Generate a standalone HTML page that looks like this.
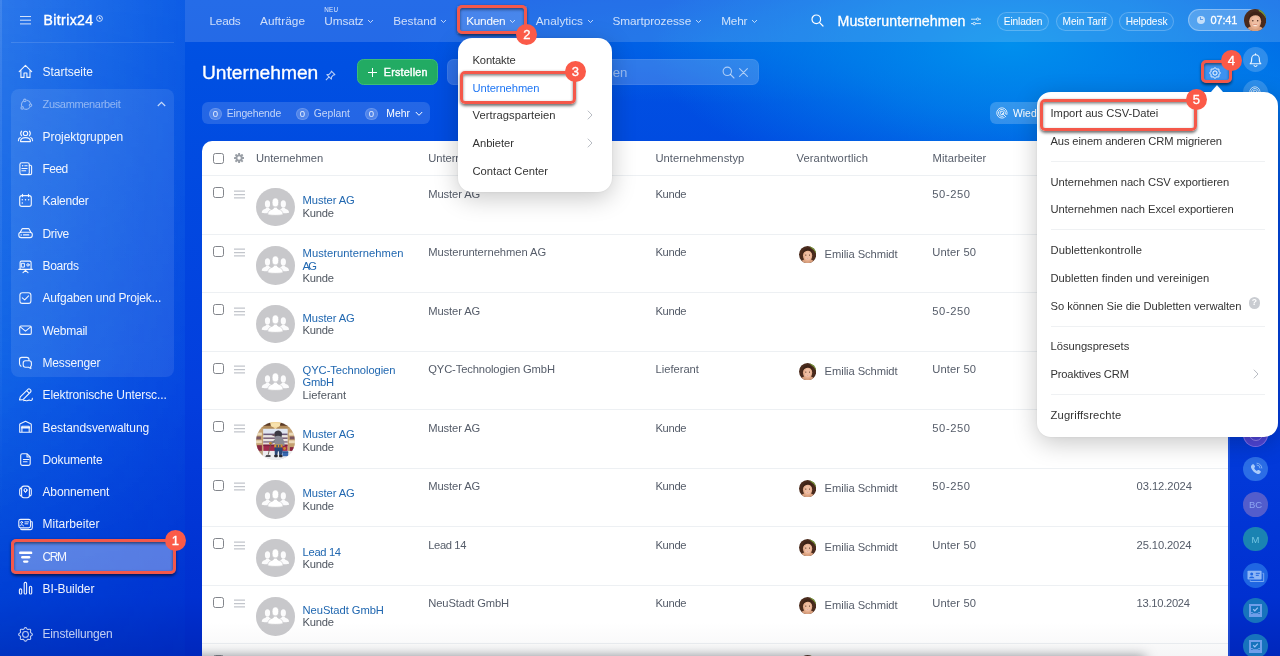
<!DOCTYPE html><html lang="de"><head><meta charset="utf-8"><title>Unternehmen</title><style>
*{box-sizing:border-box;margin:0;padding:0}
html,body{width:1280px;height:656px;overflow:hidden}
body{position:relative;font-family:"Liberation Sans",sans-serif;color:#fff;
 background:
  radial-gradient(ellipse 360px 150px at 1010px 45px, rgba(0,146,238,.95) 0%, rgba(0,142,236,.62) 45%, rgba(0,140,236,0) 100%),
  radial-gradient(ellipse 420px 120px at 1280px 90px, rgba(0,120,232,.8) 0%, rgba(0,120,232,0) 100%),
  radial-gradient(ellipse 330px 62px at 720px 42px, rgba(0,130,236,.42) 0%, rgba(0,130,236,0) 100%),
  linear-gradient(180deg,#0053e4 0%,#0050e2 10%,#033ede 60%,#0030d0 91%,#0027bc 100%);}
#app{position:absolute;left:0;top:0;width:1280px;height:656px;overflow:hidden;will-change:transform}
.abs{position:absolute}
.t{position:absolute;white-space:nowrap;line-height:1}
#sidebar{left:0;top:0;width:185px;height:656px}
#sidebar i{position:absolute;inset:0;display:block}
#sidebar i.a{background:linear-gradient(90deg,rgba(255,255,255,.17) 0,rgba(255,255,255,.05) 100%);-webkit-mask-image:linear-gradient(180deg,#000 0,rgba(0,0,0,.3) 60%,transparent 90%);mask-image:linear-gradient(180deg,#000 0,rgba(0,0,0,.3) 60%,transparent 90%)}
#sidebar i.b{background:linear-gradient(90deg,rgba(0,200,255,.2) 0,rgba(0,200,255,.05) 100%);-webkit-mask-image:linear-gradient(180deg,rgba(0,0,0,.4) 0,#000 55%,rgba(0,0,0,.4) 100%);mask-image:linear-gradient(180deg,rgba(0,0,0,.4) 0,#000 55%,rgba(0,0,0,.4) 100%)}
#sidebar:after{content:"";position:absolute;left:0;top:0;width:1.5px;height:100%;background:linear-gradient(180deg,rgba(255,255,255,.1),rgba(255,255,255,0) 80%)}
#topbar{left:185px;top:0;width:1095px;height:41.5px;background:rgba(255,255,255,.145)}
#grp{left:11px;top:89px;width:163px;height:288px;border-radius:8px;background:rgba(255,255,255,.09)}
.si{font-size:12px;color:#fff;left:42.5px}
.ic{position:absolute;fill:none;stroke:rgba(255,255,255,.93);stroke-width:1.1;stroke-linecap:round;stroke-linejoin:round;overflow:visible}
.nav{font-size:11.7px;color:rgba(255,255,255,.78)}
.chev{position:absolute;width:7px;height:5px;fill:none;stroke:rgba(255,255,255,.7);stroke-width:1}
.pill{position:absolute;top:12px;height:18.5px;background:rgba(255,255,255,.04);border:1px solid rgba(255,255,255,.22);border-radius:10px;font-size:10.3px;color:#fff;text-align:center;line-height:16.5px;white-space:nowrap}
#grid{left:202px;top:141px;width:1026px;height:520px;background:#fff;border-radius:10px 0 0 0}
.hl{position:absolute;left:202px;width:1026px;height:1px;background:#edf0f3}
.th,.td{position:absolute;white-space:nowrap;line-height:1;font-size:11px;color:#555c66}
.lnk{position:absolute;white-space:nowrap;line-height:12.5px;font-size:11.2px;color:#2067b0}
.cb{position:absolute;left:213px;width:11.2px;height:11.2px;border:1px solid #82858b;border-radius:2.5px;background:#fff}
.hd{position:absolute;left:233.8px;width:11.4px;height:7.7px;border-top:1px solid #b9bdc3;border-bottom:1px solid #b9bdc3}
.hd:after{content:"";position:absolute;left:0;right:0;top:2.35px;height:1px;background:#b9bdc3}
.av{position:absolute;left:256.3px;width:38.8px;height:38.6px;border-radius:50%;background:#c8c8cb;overflow:hidden}
.ua{position:absolute;left:799.5px;width:17px;height:17px;border-radius:50%;overflow:hidden}
.menu{position:absolute;background:#fff;box-shadow:0 6px 24px rgba(0,0,0,.22),0 0 2px rgba(0,0,0,.08)}
.mi{position:absolute;white-space:nowrap;line-height:1;font-size:11.1px;color:#333}
.sep{position:absolute;left:1050.5px;width:214px;height:1px;background:#eff1f3}
.rb{position:absolute;border:3px solid #f4584a;border-radius:5px;box-shadow:0 1.5px 3px rgba(0,0,0,.55),inset 0 1.5px 3px rgba(0,0,0,.5)}
.bd{position:absolute;width:21px;height:21px;border-radius:50%;background:#fb5a48;color:#fff;font-size:13px;-webkit-text-stroke:.35px #fff;text-align:center;line-height:21.5px}
.rc{position:absolute;left:1243px;width:24.8px;height:24.8px;border-radius:50%;background:rgba(255,255,255,.18)}
.cnt{position:absolute;top:107.5px;width:12.4px;height:12.4px;border-radius:50%;background:rgba(255,255,255,.2);box-shadow:inset 0 0 0 1px rgba(255,255,255,.14);font-size:9.6px;line-height:12.6px;text-align:center;color:rgba(255,255,255,.85)}
.ct{font-size:10.3px;color:rgba(255,255,255,.72);top:107.5px}
</style></head><body><div id="app">
<div id="sidebar" class="abs"><i class="b"></i><i class="a"></i></div><div id="topbar" class="abs"></div><div id="grp" class="abs"></div>
<div class="abs" style="left:11px;top:42px;width:163px;height:1px;background:rgba(255,255,255,.13)"></div>
<div class="abs" style="left:19.5px;top:16px;width:11.5px;height:1.2px;background:rgba(255,255,255,.8);box-shadow:0 3.7px 0 rgba(255,255,255,.8),0 7.4px 0 rgba(255,255,255,.8)"></div>
<div class="t" style="left:43.6px;top:13px;font-size:14px;letter-spacing:0.387px;-webkit-text-stroke:.38px #fff;">Bitrix24</div>
<svg class="abs" style="left:96px;top:15px" width="7" height="7" viewBox="0 0 7 7" fill="none" stroke="rgba(255,255,255,.85)" stroke-width=".9"><circle cx="3.5" cy="3.5" r="2.9"/><path d="M3.5 1.8v1.9h1.5"/></svg>
<div class="abs" style="left:11px;top:540px;width:164px;height:34px;border-radius:4px;background:rgba(255,255,255,.34)"></div>
<svg class="ic" style="left:16px;top:62px;width:20px;height:20px;" viewBox="16 62 20 20"><path d="M19.2 71.7 25.45 65.4l6.25 6.300M20.900 70.300V77.400h3.100v-4.400h2.900v4.400H30V70.300"/></svg>
<div class="t" style="left:42.5px;top:66px;font-size:12px;letter-spacing:-0.023px;color:rgba(255,255,255,.94);">Startseite</div>
<svg class="ic" style="left:16px;top:94px;width:20px;height:20px;opacity:0.5;" viewBox="16 94 20 20"><circle cx="24.8" cy="100.4" r="1.25"/><circle cx="30.500" cy="105.300" r="1.250"/><circle cx="22.200" cy="107.900" r="1.250"/><path d="M27.06 100.20A4.6 4.6 0 0 1 30.56 103.59M29.72 107.53A4.6 4.6 0 0 1 24.38 108.97M21.60 105.66A4.6 4.6 0 0 1 22.90 101.39"/></svg>
<div class="t" style="left:42.5px;top:99px;font-size:11px;letter-spacing:-0.331px;color:rgba(255,255,255,.94);opacity:0.5;">Zusammenarbeit</div>
<svg class="ic" style="left:16px;top:126px;width:20px;height:20px;" viewBox="16 126 20 20"><circle cx="25.5" cy="133.4" r="2.15"/><path d="M21.6 131.200Q19.700 133.500 21.600 135.800M29.400 131.200q1.900 2.300 0 4.600M20.500 141.600c0-5.300 10-5.300 10 0zM18.400 140.800c0-1.700.8-2.800 1.900-3.200M32.600 140.800c0-1.700-.8-2.800-1.900-3.200"/></svg>
<div class="t" style="left:42.5px;top:131px;font-size:12px;letter-spacing:-0.049px;color:rgba(255,255,255,.94);">Projektgruppen</div>
<svg class="ic" style="left:16px;top:159px;width:20px;height:20px;" viewBox="16 159 20 20"><rect x="19.9" y="162.7" width="9.4" height="11.9" rx="1.8"/><path d="M29.300 165.300h1a1.300 1.300 0 0 1 1.300 1.300v6.700a1.300 1.300 0 0 1-1.300 1.300H28M24.800 165.800h2.300M21.900 168.500h5.200M21.900 170.800h3.800"/><path d="M22.6 165.8h.01" stroke-width="1.500"/></svg>
<div class="t" style="left:42.5px;top:163px;font-size:12px;letter-spacing:-0.536px;color:rgba(255,255,255,.94);">Feed</div>
<svg class="ic" style="left:16px;top:191px;width:20px;height:20px;" viewBox="16 191 20 20"><rect x="19.7" y="195.6" width="11.6" height="10.8" rx="2.2"/><path d="M22.500 194.400v2.200M28.500 194.400v2.200"/><path d="M22.3 199.8h.01M25.5 199.8h.01M28.6 199.8h.01M22.3 203h.01" stroke-width="1.500"/></svg>
<div class="t" style="left:42.5px;top:195px;font-size:12px;letter-spacing:-0.257px;color:rgba(255,255,255,.94);">Kalender</div>
<svg class="ic" style="left:16px;top:223px;width:20px;height:20px;" viewBox="16 223 20 20"><rect x="18.8" y="232.3" width="13.500" height="5.300" rx="2.300"/><path d="M20.300 232.300 22 229q.2-.4.700-.4h5.700q.5 0 .7.400l1.700 3.300M23.500 234.900h5.300"/><path d="M21.2 234.9h.01" stroke-width="1.500"/></svg>
<div class="t" style="left:42.5px;top:228px;font-size:12px;letter-spacing:-0.316px;color:rgba(255,255,255,.94);">Drive</div>
<svg class="ic" style="left:16px;top:256px;width:20px;height:20px;" viewBox="16 256 20 20"><path d="M20.100 269.400v-7a1.300 1.300 0 0 1 1.300-1.300h8.400a1.300 1.300 0 0 1 1.300 1.300v7M18.800 269.400h13.500M23 272.600l2.500-2.300 2.500 2.300"/><rect x="21.700" y="263.300" width="2.700" height="3.800" stroke-width="1"/><circle cx="28" cy="264.900" r="1.200" stroke-width="1"/></svg>
<div class="t" style="left:42.5px;top:260px;font-size:12px;letter-spacing:-0.306px;color:rgba(255,255,255,.94);">Boards</div>
<svg class="ic" style="left:16px;top:288px;width:20px;height:20px;" viewBox="16 288 20 20"><rect x="19.9" y="292.700" width="11" height="10.700" rx="2.400"/><path d="m22.300 297.800 2.400 2.100 3.900-4"/></svg>
<div class="t" style="left:42.5px;top:292px;font-size:12px;letter-spacing:-0.159px;color:rgba(255,255,255,.94);">Aufgaben und Projek...</div>
<svg class="ic" style="left:16px;top:320px;width:20px;height:20px;" viewBox="16 320 20 20"><rect x="19.700" y="326" width="11.600" height="8.400" rx="1.300"/><path d="m20.300 326.900 5.200 4.200 5.200-4.200"/></svg>
<div class="t" style="left:42.5px;top:325px;font-size:12px;letter-spacing:-0.245px;color:rgba(255,255,255,.94);">Webmail</div>
<svg class="ic" style="left:16px;top:352px;width:20px;height:20px;" viewBox="16 352 20 20"><path d="M29 360.200v-.5a2.300 2.300 0 0 0-2.300-2.300h-4.900a2.300 2.300 0 0 0-2.300 2.300v3.800c0 1.300.5 2.100 1.500 2.800"/><path d="M25.400 360.800h3.800a2.200 2.200 0 0 1 2.200 2.200v2a2.200 2.200 0 0 1-.8 1.700l.3 1.900-2.300-1.400h-3.200a2.200 2.200 0 0 1-2.200-2.200v-2a2.200 2.200 0 0 1 2.200-2.200z"/></svg>
<div class="t" style="left:42.5px;top:357px;font-size:12px;letter-spacing:-0.172px;color:rgba(255,255,255,.94);">Messenger</div>
<svg class="ic" style="left:16px;top:385px;width:20px;height:20px;" viewBox="16 385 20 20"><path d="m19.500 400 .8-3.100 7.600-7.600a1.500 1.500 0 0 1 2.100 0l.6.600a1.500 1.500 0 0 1 0 2.100L23 399.600zM26.700 390.600l2.700 2.700"/><path d="M23.600 400.700c1-.9 2 .2 3 .1s2-1.100 3.200-.6 2.900.4 2.500-2"/></svg>
<div class="t" style="left:42.5px;top:389px;font-size:12px;letter-spacing:-0.107px;color:rgba(255,255,255,.94);">Elektronische Untersc...</div>
<svg class="ic" style="left:16px;top:417px;width:20px;height:20px;" viewBox="16 417 20 20"><path d="M19.700 432.300v-7.700q0-.6.600-.9l5.200-2.500 5.200 2.500q.6.300.6.900v7.700zM21.900 432.300v-6.100h7.300v6.100"/><path d="M21.900 427.700h7.300" stroke-width="1.700"/></svg>
<div class="t" style="left:42.5px;top:422px;font-size:12px;letter-spacing:-0.078px;color:rgba(255,255,255,.94);">Bestandsverwaltung</div>
<svg class="ic" style="left:16px;top:449px;width:20px;height:20px;" viewBox="16 449 20 20"><path d="M20.700 455.600a1.800 1.800 0 0 1 1.800-1.800h4.700l3 3v6.800a1.800 1.800 0 0 1-1.800 1.800h-5.900a1.800 1.800 0 0 1-1.800-1.800zM27 454v3h3M23.400 459.500h5.400M23.400 461.800h3.700"/></svg>
<div class="t" style="left:42.5px;top:454px;font-size:12px;letter-spacing:-0.141px;color:rgba(255,255,255,.94);">Dokumente</div>
<svg class="ic" style="left:16px;top:481px;width:20px;height:20px;" viewBox="16 481 20 20"><rect x="21.600" y="486.100" width="7.800" height="11.600" rx="2.200"/><path d="M20.900 487.900q-1.200.7-1.200 2.100v4q0 1.300 1.200 2M30.100 487.900q1.200.7 1.200 2.100v4q0 1.300-1.200 2"/><circle cx="25.500" cy="490" r="1.500" stroke-width="1"/><path d="m24.300 490.900 1.200 1.700 1.200-1.700" stroke-width="1"/></svg>
<div class="t" style="left:42.5px;top:486px;font-size:12px;letter-spacing:-0.129px;color:rgba(255,255,255,.94);">Abonnement</div>
<svg class="ic" style="left:16px;top:514px;width:20px;height:20px;" viewBox="16 514 20 20"><rect x="18.800" y="519.400" width="11.700" height="8.500" rx="1.800"/><path d="M31.700 521.500q.6.500.6 1.500v4.800a1.800 1.800 0 0 1-1.800 1.800H22q-1 0-1.400-.6"/><circle cx="21.700" cy="522.400" r=".95" stroke-width="1"/><path d="M19.900 525.900c.2-1.700 3.400-1.700 3.600 0M24.900 521.900h3.700M24.900 523.800h3" stroke-width="1"/></svg>
<div class="t" style="left:42.5px;top:518px;font-size:12px;letter-spacing:0.031px;color:rgba(255,255,255,.94);">Mitarbeiter</div>
<svg class="abs" style="left:17px;top:548px" width="18" height="18" viewBox="17 548 18 18" fill="#fff"><rect x="19.1" y="551.6" width="13.2" height="2.5" rx="1.2"/><rect x="21.100" y="556" width="9.200" height="2.400" rx="1.200"/><rect x="23" y="560.400" width="5.500" height="2.300" rx="1.150"/></svg>
<div class="t" style="left:42.5px;top:551px;font-size:12px;letter-spacing:-1.414px;color:rgba(255,255,255,.94);">CRM</div>
<svg class="ic" style="left:16px;top:578px;width:20px;height:20px;" viewBox="16 578 20 20"><rect x="19.400" y="588.900" width="2.300" height="5.100" rx="1.100"/><rect x="24.200" y="582.400" width="2.400" height="11.600" rx="1.100"/><rect x="29.400" y="586.300" width="2.300" height="7.700" rx="1.100"/></svg>
<div class="t" style="left:42.5px;top:583px;font-size:12px;letter-spacing:-0.087px;color:rgba(255,255,255,.94);">BI-Builder</div>
<svg class="ic" style="left:16px;top:624px;width:20px;height:20px;opacity:0.8;" viewBox="16 624 20 20"><path d="M32.40 634.40L32.20 634.99L31.68 635.49L31.08 635.89L30.62 636.26L30.44 636.70L30.50 637.29L30.64 638.00L30.65 638.72L30.38 639.28L29.82 639.55L29.10 639.54L28.39 639.40L27.80 639.34L27.36 639.52L26.99 639.98L26.59 640.58L26.09 641.10L25.50 641.30L24.91 641.10L24.41 640.58L24.01 639.98L23.64 639.52L23.20 639.34L22.61 639.40L21.90 639.54L21.18 639.55L20.62 639.28L20.35 638.72L20.36 638.00L20.50 637.29L20.56 636.70L20.38 636.26L19.92 635.89L19.32 635.49L18.80 634.99L18.60 634.40L18.80 633.81L19.32 633.31L19.92 632.91L20.38 632.54L20.56 632.10L20.50 631.51L20.36 630.80L20.35 630.08L20.62 629.52L21.18 629.25L21.90 629.26L22.61 629.40L23.20 629.46L23.64 629.28L24.01 628.82L24.41 628.22L24.91 627.70L25.50 627.50L26.09 627.70L26.59 628.22L26.99 628.82L27.36 629.28L27.80 629.46L28.39 629.40L29.10 629.26L29.82 629.25L30.38 629.52L30.65 630.08L30.64 630.80L30.50 631.51L30.44 632.10L30.62 632.54L31.08 632.91L31.68 633.31L32.20 633.81Z"/><circle cx="25.500" cy="634.400" r="2.900"/></svg>
<div class="t" style="left:42.5px;top:628px;font-size:12px;letter-spacing:-0.155px;color:rgba(255,255,255,.94);opacity:0.8;">Einstellungen</div>
<svg class="abs" style="left:157px;top:101px" width="9" height="6" viewBox="0 0 9 6" fill="none" stroke="rgba(255,255,255,.75)" stroke-width="1.2"><path d="M.8 5 4.5 1.3 8.2 5"/></svg>
<div class="abs" style="left:457px;top:6px;width:69.5px;height:28px;background:rgba(255,255,255,.16)"></div>
<div class="t" style="left:209.5px;top:16px;font-size:11.8px;letter-spacing:-0.227px;color:rgba(255,255,255,.78);">Leads</div>
<div class="t" style="left:260px;top:16px;font-size:11.8px;letter-spacing:0.056px;color:rgba(255,255,255,.78);">Aufträge</div>
<div class="t" style="left:324.25px;top:16px;font-size:11.8px;letter-spacing:-0.097px;color:rgba(255,255,255,.78);">Umsatz</div>
<svg class="chev" style="left:367.25px;top:19px" viewBox="0 0 7 5"><path d="M1 1l2.5 2.5L6 1"/></svg>
<div class="t" style="left:393.25px;top:16px;font-size:11.8px;letter-spacing:-0.049px;color:rgba(255,255,255,.78);">Bestand</div>
<svg class="chev" style="left:439.75px;top:19px" viewBox="0 0 7 5"><path d="M1 1l2.5 2.5L6 1"/></svg>
<div class="t" style="left:466.25px;top:16px;font-size:11.8px;letter-spacing:-0.287px;color:#fff;">Kunden</div>
<svg class="chev" style="left:509.0px;top:19px" viewBox="0 0 7 5"><path d="M1 1l2.5 2.5L6 1"/></svg>
<div class="t" style="left:535.75px;top:16px;font-size:11.8px;letter-spacing:0.004px;color:rgba(255,255,255,.78);">Analytics</div>
<svg class="chev" style="left:586.5px;top:19px" viewBox="0 0 7 5"><path d="M1 1l2.5 2.5L6 1"/></svg>
<div class="t" style="left:612.5px;top:16px;font-size:11.8px;letter-spacing:-0.049px;color:rgba(255,255,255,.78);">Smartprozesse</div>
<svg class="chev" style="left:694.75px;top:19px" viewBox="0 0 7 5"><path d="M1 1l2.5 2.5L6 1"/></svg>
<div class="t" style="left:721.25px;top:16px;font-size:11.8px;letter-spacing:-0.214px;color:rgba(255,255,255,.78);">Mehr</div>
<svg class="chev" style="left:751.0px;top:19px" viewBox="0 0 7 5"><path d="M1 1l2.5 2.5L6 1"/></svg>
<div class="t" style="left:324.25px;top:7px;font-size:6.3px;letter-spacing:0.227px;color:rgba(255,255,255,.85);">NEU</div>
<svg class="abs" style="left:811px;top:14px" width="13" height="13" viewBox="0 0 13 13" fill="none" stroke="#fff" stroke-width="1.2" stroke-linecap="round"><circle cx="5.3" cy="5.3" r="4.3"/><path d="M8.6 8.6 12 12"/></svg>
<div class="t" style="left:837.5px;top:14px;font-size:14.2px;letter-spacing:0.064px;-webkit-text-stroke:.3px #fff;">Musterunternehmen</div>
<svg class="abs" style="left:971px;top:17px" width="10" height="9" viewBox="0 0 10 9" fill="none" stroke="rgba(255,255,255,.75)" stroke-width="1"><path d="M0 2.2h5.5M8 2.2h2M0 6.6h2M4.5 6.6H10"/><circle cx="6.7" cy="2.2" r="1.2"/><circle cx="3.3" cy="6.6" r="1.2"/></svg>
<div class="pill" style="left:997px;width:52px"></div>
<div class="pill" style="left:1055.5px;width:57.5px"></div>
<div class="pill" style="left:1119px;width:55px"></div>
<div class="t" style="left:1003.75px;top:17px;font-size:10.2px;letter-spacing:-0.129px;">Einladen</div>
<div class="t" style="left:1062.5px;top:17px;font-size:10.2px;letter-spacing:-0.026px;">Mein Tarif</div>
<div class="t" style="left:1125.75px;top:17px;font-size:10.2px;letter-spacing:-0.105px;">Helpdesk</div>
<div class="abs" style="left:1187.7px;top:9px;width:78.5px;height:22px;border-radius:11px;background:rgba(255,255,255,.22);border:1px solid rgba(255,255,255,.3)"></div>
<div class="abs" style="left:1196.8px;top:15.7px;width:8px;height:8px;border-radius:50%;background:rgba(255,255,255,.66)"></div>
<div class="abs" style="left:1200.4px;top:17.400px;width:2.600px;height:2.800px;border-left:1px solid #5f9eeb;border-bottom:1px solid #5f9eeb"></div>
<div class="t" style="left:1210.5px;top:15px;font-size:11px;letter-spacing:-0.158px;-webkit-text-stroke:.3px #fff;">07:41</div>
<svg class="abs" style="left:1243.9px;top:8.8px" width="22.3" height="22.3" viewBox="0 0 22 22"><defs><clipPath id="fa0"><circle cx="11" cy="11" r="11"/></clipPath></defs><g clip-path="url(#fa0)"><rect width="22" height="22" fill="#4a2b1d"/><path d="M14.5 0H22v10Q19.5 4.500 14.500 2z" fill="#7a9e3a"/><path d="M2 22c.5-3 3-4.500 5.500-5h7c2.500.5 5 2 5.500 5z" fill="#d9a07e"/><ellipse cx="11" cy="12.2" rx="5.900" ry="7.500" fill="#e6ae8e"/><ellipse cx="11.300" cy="12.500" rx="4" ry="5.500" fill="#efbea2"/><path d="M4.300 11C4.500 4.500 8.500 2.300 12 2.800c4 .5 6 3.700 5.800 8.700C16.500 8 14.300 6.200 11.500 6.200 8.500 6.200 6 7.800 4.300 11z" fill="#3e2317"/><circle cx="8.700" cy="11.600" r=".75" fill="#4a2a1c"/><circle cx="13.500" cy="11.600" r=".75" fill="#4a2a1c"/><path d="M8.300 15.300q2.700 2.600 5.400 0-2.700 1.100-5.400 0z" fill="#fff"/><path d="M8.300 15.300q2.700 1.100 5.400 0-2.700-.2-5.400 0z" fill="#c9705f"/></g></svg>
<div class="t" style="left:202px;top:63px;font-size:19.2px;letter-spacing:-0.002px;-webkit-text-stroke:.32px #fff;">Unternehmen</div>
<svg class="abs" style="left:324.5px;top:69.5px" width="11" height="11" viewBox="0 0 10 10" fill="none" stroke="rgba(255,255,255,.72)" stroke-width=".95" stroke-linejoin="round"><path d="M5.8 1 9 4.2 7.8 4.5 6 6.3 5.8 8.3 1.7 4.200l2-.2L5.500 2.200z"/><path d="M3.700 6.300.8 9.200"/></svg>
<div class="abs" style="left:357px;top:59.2px;width:81px;height:26px;border-radius:6.5px;background:#22ab63;border:1px solid #3cbc78"></div>
<div class="abs" style="left:368px;top:71.7px;width:9px;height:1.3px;background:#fff"></div><div class="abs" style="left:371.85px;top:67.8px;width:1.3px;height:9px;background:#fff"></div>
<div class="t" style="left:383.75px;top:67px;font-size:10.8px;letter-spacing:0.217px;-webkit-text-stroke:.4px #fff;">Erstellen</div>
<div class="abs" style="left:447px;top:59px;width:312.3px;height:26.2px;border-radius:6.5px;background:rgba(255,255,255,.185);border:1px solid rgba(255,255,255,.07)"></div>
<div class="t" style="right:652.6px;top:66px;font-size:13.2px;color:rgba(255,255,255,.5)">Filter und Suchen</div>
<svg class="abs" style="left:722px;top:66px" width="13" height="13" viewBox="0 0 13 13" fill="none" stroke="rgba(255,255,255,.6)" stroke-width="1.1" stroke-linecap="round"><circle cx="5.3" cy="5.3" r="4.2"/><path d="M8.5 8.5 12 12"/></svg>
<svg class="abs" style="left:739px;top:68px" width="9" height="9" viewBox="0 0 9 9" fill="none" stroke="rgba(255,255,255,.6)" stroke-width="1.1" stroke-linecap="round"><path d="M.6.6l7.800 7.800M8.400.6.600 8.400"/></svg>
<div class="abs" style="left:202px;top:102px;width:228px;height:22px;border-radius:6px;background:rgba(255,255,255,.14)"></div>
<div class="cnt" style="left:209.2px">0</div>
<div class="t" style="left:226.75px;top:109px;font-size:10.4px;letter-spacing:-0.109px;color:rgba(255,255,255,.72);">Eingehende</div>
<div class="cnt" style="left:296.3px">0</div>
<div class="t" style="left:313.75px;top:109px;font-size:10.4px;letter-spacing:-0.026px;color:rgba(255,255,255,.72);">Geplant</div>
<div class="cnt" style="left:365.3px">0</div>
<div class="t" style="left:386.25px;top:109px;font-size:10.4px;letter-spacing:0.021px;color:#fff;">Mehr</div>
<svg class="abs" style="left:414.5px;top:110.5px" width="8" height="6" viewBox="0 0 8 6" fill="none" stroke="#fff" stroke-width="1"><path d="M.8 1l3.200 3.300L7.200 1"/></svg>
<div class="abs" style="left:990.2px;top:102px;width:80px;height:22px;border-radius:6px;background:rgba(255,255,255,.2)"></div>
<svg class="abs" style="left:995.7px;top:107.1px" width="12" height="12" viewBox="0 0 12 12" fill="none" stroke="rgba(255,255,255,.95)" stroke-width=".85" stroke-linecap="round"><path d="M10.9 7.600A5.200 5.200 0 1 0 8.200 10.700"/><path d="M9.300 7A3.500 3.500 0 1 0 7 9.300"/><path d="M7.600 6.600A1.800 1.800 0 1 0 6.600 7.600"/><path d="M6 6l3.800 3.800"/></svg>
<div class="t" style="left:1013px;top:109px;font-size:10.4px;">Wiederherstellen</div>
<div class="abs" style="left:1228px;top:141px;width:1.5px;height:515px;background:rgba(120,170,255,.25)"></div>
<div class="rc" style="top:47.4px"></div>
<div class="rc" style="top:80.0px"></div>
<svg class="abs" style="left:1248.9px;top:52.6px" width="13" height="15" viewBox="0 0 13 15" fill="none" stroke="rgba(255,255,255,.92)" stroke-width="1.1" stroke-linejoin="round" stroke-linecap="round"><path d="M1.200 10.800c1.400-1.100 1.500-2.600 1.500-5.300a3.800 3.800 0 0 1 7.600 0c0 2.700.1 4.200 1.500 5.300z"/><path d="M5 12.400a1.600 1.600 0 0 0 3 0"/><path d="M6.500 1.700V.9"/></svg>
<svg class="abs" style="left:1249.4px;top:86.4px" width="12" height="12" viewBox="0 0 12 12" fill="none" stroke="rgba(255,255,255,.85)" stroke-width=".85" stroke-linecap="round"><path d="M10.9 7.600A5.200 5.200 0 1 0 8.200 10.700"/><path d="M9.300 7A3.500 3.500 0 1 0 7 9.300"/><path d="M7.600 6.600A1.800 1.800 0 1 0 6.600 7.600"/><path d="M6 6l3.800 3.800"/></svg>
<div class="abs" style="left:1243px;top:421.500px;width:25px;height:25px;border-radius:50%;background:#4f46d8;box-shadow:inset 0 0 0 1px rgba(170,150,255,.55)"></div>
<div class="abs" style="left:1248.500px;top:427px;width:14px;height:14px;border-radius:50%;border:1px solid rgba(190,170,255,.6)"></div>
<div class="abs" style="left:1243.200px;top:456.700px;width:24.600px;height:24.600px;border-radius:50%;background:#2b6de6"></div>
<svg class="abs" style="left:1248.500px;top:461.500px" width="14" height="14" viewBox="0 0 14 14"><path d="M3.300 2.500c.5-.5 1.200-.5 1.600 0l1 1.500c.3.500.2 1-.2 1.400l-.6.600c.5 1.200 1.500 2.300 2.800 2.900l.6-.6c.4-.4 1-.5 1.400-.2l1.500 1c.5.400.5 1.100 0 1.600l-.7.700c-.7.700-1.800.8-2.700.4C5.300 10.600 3.300 8.600 2.200 6c-.400-.9-.300-2 .400-2.700z" fill="#a9cbfb"/><path d="M8 3a3 3 0 0 1 3 3M8 1.200A4.800 4.800 0 0 1 12.800 6" fill="none" stroke="#8fb9f5" stroke-width=".9" stroke-linecap="round"/></svg>
<div class="abs" style="left:1243.200px;top:492.100px;width:24.600px;height:24.600px;border-radius:50%;background:#535dcc"></div>
<div class="t" style="left:1243.200px;width:24.600px;text-align:center;top:499.800px;font-size:9.500px;color:#8ea6f2">BC</div>
<div class="abs" style="left:1243.200px;top:526.800px;width:24.600px;height:24.600px;border-radius:50%;background:#1a83b2"></div>
<div class="t" style="left:1243.200px;width:24.600px;text-align:center;top:534.500px;font-size:9.500px;color:#74c6e2">M</div>
<div class="abs" style="left:1243.100px;top:562.800px;width:24.800px;height:24.800px;border-radius:50%;background:#1f66e2"></div>
<svg class="abs" style="left:1246.500px;top:569.500px" width="18" height="13" viewBox="0 0 18 13"><path d="M3.200 10.300v1.200h13.500V3.300h-1.200" fill="none" stroke="#7eaaf2" stroke-width="1"/><rect x=".5" y=".7" width="14.100" height="8.800" rx=".8" fill="#8db6f6"/><circle cx="4.700" cy="3.900" r="1.500" fill="#1f66e2"/><path d="M2 8.200c.3-2.200 5.100-2.200 5.400 0z" fill="#1f66e2"/><path d="M8.800 3.300h4M8.800 5.300h3" stroke="#1f66e2" stroke-width="1"/></svg>
<div class="abs" style="left:1243.100px;top:598.2px;width:24.800px;height:24.800px;border-radius:50%;background:#1773bd"></div>
<svg class="abs" style="left:1249px;top:604.1px" width="13" height="13" viewBox="0 0 13 13" fill="none" stroke="#6f9eea"><rect x="1" y="1" width="11" height="11" stroke-width="2"/><path d="M1 8.500h2.700l.8 1.300h4l.8-1.300H12" stroke-width="1"/><path d="M1 11h11" stroke-width="2.500"/><path d="m4.200 5.300 1.600 1.500 3-3.100" stroke-width="1.200" stroke="#9cc0f6"/></svg>
<div class="abs" style="left:1243.100px;top:633.7px;width:24.800px;height:24.800px;border-radius:50%;background:#1773bd"></div>
<svg class="abs" style="left:1249px;top:639.6px" width="13" height="13" viewBox="0 0 13 13" fill="none" stroke="#6f9eea"><rect x="1" y="1" width="11" height="11" stroke-width="2"/><path d="M1 8.500h2.700l.8 1.300h4l.8-1.300H12" stroke-width="1"/><path d="M1 11h11" stroke-width="2.500"/><path d="m4.200 5.300 1.600 1.500 3-3.100" stroke-width="1.200" stroke="#9cc0f6"/></svg>
<div id="grid" class="abs"></div>
<div class="cb" style="top:153.3px"></div>
<svg class="abs" style="left:233.6px;top:153.3px" width="10.2" height="10.2" viewBox="-8 -8 16 16"><g fill="#9a9fa6"><circle r="5.6"/><rect x="-1.55" y="-8" width="3.1" height="4" rx=".5" transform="rotate(0)"/><rect x="-1.55" y="-8" width="3.1" height="4" rx=".5" transform="rotate(45)"/><rect x="-1.55" y="-8" width="3.1" height="4" rx=".5" transform="rotate(90)"/><rect x="-1.55" y="-8" width="3.1" height="4" rx=".5" transform="rotate(135)"/><rect x="-1.55" y="-8" width="3.1" height="4" rx=".5" transform="rotate(180)"/><rect x="-1.55" y="-8" width="3.1" height="4" rx=".5" transform="rotate(225)"/><rect x="-1.55" y="-8" width="3.1" height="4" rx=".5" transform="rotate(270)"/><rect x="-1.55" y="-8" width="3.1" height="4" rx=".5" transform="rotate(315)"/></g><circle r="2.7" fill="#fff"/></svg>
<div class="t" style="left:256px;top:153px;font-size:11.2px;letter-spacing:-0.055px;color:#555c69;">Unternehmen</div>
<div class="t" style="left:428.25px;top:153px;font-size:11.2px;letter-spacing:-0.055px;color:#555c69;">Unternehmen</div>
<div class="t" style="left:655.5px;top:153px;font-size:11.2px;letter-spacing:0.031px;color:#555c69;">Unternehmenstyp</div>
<div class="t" style="left:796.5px;top:153px;font-size:11.2px;letter-spacing:0.095px;color:#555c69;">Verantwortlich</div>
<div class="t" style="left:932.5px;top:153px;font-size:11.2px;letter-spacing:0.089px;color:#555c69;">Mitarbeiter</div>
<div class="hl" style="top:175.0px"></div>
<div class="hl" style="top:233.5px"></div>
<div class="hl" style="top:292.0px"></div>
<div class="hl" style="top:350.5px"></div>
<div class="hl" style="top:409.0px"></div>
<div class="hl" style="top:467.5px"></div>
<div class="hl" style="top:526.0px"></div>
<div class="hl" style="top:584.5px"></div>
<div class="hl" style="top:643.0px"></div>
<div class="cb" style="top:187.2px"></div><svg class="abs" style="left:233.8px;top:188.5px" width="11.4" height="12" viewBox="0 0 11.4 12" stroke="#c2c5cb" stroke-width="1.25"><path d="M0 2.200h11.400M0 5.600h11.400M0 9h11.400"/></svg>
<div class="av" style="top:187.5px"><svg width="38.8" height="38.6" viewBox="0 0 40 40" fill="#fff"><g opacity=".93"><ellipse cx="11.8" cy="16.5" rx="2.700" ry="3.700"/><path d="M5.800 25.700c.2-2.200 1.300-3.300 3.400-3.900.9-.3 1.300-.8 1.400-1.500h2.400c.1.700.5 1.200 1.400 1.500l1.200.5-1.600 3.900c-2.900.1-5.700 0-8.200-.5z"/><ellipse cx="28.200" cy="16.500" rx="2.700" ry="3.700"/><path d="M34.200 25.700c-.2-2.200-1.300-3.300-3.400-3.900-.9-.3-1.300-.8-1.400-1.500H27c-.1.700-.5 1.200-1.400 1.500l-1.200.5 1.600 3.900c2.900.1 5.700 0 8.200-.5z"/></g><g stroke="#c8c8cb" stroke-width=".7"><ellipse cx="20" cy="15" rx="3.400" ry="4.700"/><path d="M12 27.600c.3-3.200 1.600-4.600 4.300-5.400 1.400-.4 2-1.100 2.100-2.300h3.200c.1 1.200.7 1.900 2.100 2.300 2.700.8 4 2.200 4.300 5.400-5.100 1-10.900 1-16 0z"/></g></svg></div>
<div class="t" style="left:302.6px;top:195px;font-size:11.2px;letter-spacing:-0.082px;color:#2067b0;">Muster AG</div>
<div class="t" style="left:302.6px;top:208px;font-size:11.2px;letter-spacing:-0.24px;color:#4f5660;">Kunde</div>
<div class="t" style="left:428.25px;top:189px;font-size:11.2px;letter-spacing:-0.107px;color:#555c69;">Muster AG</div>
<div class="t" style="left:655.5px;top:189px;font-size:11.2px;letter-spacing:-0.34px;color:#555c69;">Kunde</div>
<div class="t" style="left:932.3px;top:189px;font-size:11.2px;letter-spacing:0.571px;color:#555c69;">50-250</div>
<div class="cb" style="top:245.7px"></div><svg class="abs" style="left:233.8px;top:247px" width="11.4" height="12" viewBox="0 0 11.4 12" stroke="#c2c5cb" stroke-width="1.25"><path d="M0 2.200h11.400M0 5.600h11.400M0 9h11.400"/></svg>
<div class="av" style="top:246px"><svg width="38.8" height="38.6" viewBox="0 0 40 40" fill="#fff"><g opacity=".93"><ellipse cx="11.8" cy="16.5" rx="2.700" ry="3.700"/><path d="M5.800 25.700c.2-2.200 1.300-3.300 3.400-3.900.9-.3 1.300-.8 1.400-1.500h2.400c.1.700.5 1.200 1.400 1.500l1.200.5-1.600 3.900c-2.900.1-5.700 0-8.200-.5z"/><ellipse cx="28.200" cy="16.500" rx="2.700" ry="3.700"/><path d="M34.200 25.700c-.2-2.200-1.300-3.300-3.400-3.900-.9-.3-1.300-.8-1.400-1.500H27c-.1.700-.5 1.200-1.400 1.500l-1.200.5 1.600 3.900c2.900.1 5.700 0 8.200-.5z"/></g><g stroke="#c8c8cb" stroke-width=".7"><ellipse cx="20" cy="15" rx="3.400" ry="4.700"/><path d="M12 27.600c.3-3.200 1.600-4.600 4.300-5.400 1.400-.4 2-1.100 2.100-2.300h3.200c.1 1.200.7 1.900 2.100 2.300 2.700.8 4 2.200 4.300 5.400-5.100 1-10.900 1-16 0z"/></g></svg></div>
<div class="t" style="left:302.6px;top:248px;font-size:11.2px;letter-spacing:0.048px;color:#2067b0;">Musterunternehmen</div>
<div class="t" style="left:302.6px;top:261px;font-size:11.2px;letter-spacing:-1.772px;color:#2067b0;">AG</div>
<div class="t" style="left:302.6px;top:273px;font-size:11.2px;letter-spacing:-0.24px;color:#4f5660;">Kunde</div>
<div class="t" style="left:428.25px;top:247px;font-size:11.2px;letter-spacing:-0.041px;color:#555c69;">Musterunternehmen AG</div>
<div class="t" style="left:655.5px;top:247px;font-size:11.2px;letter-spacing:-0.34px;color:#555c69;">Kunde</div>
<svg class="abs" style="left:799.3px;top:246px" width="17.2" height="17.2" viewBox="0 0 22 22"><defs><clipPath id="fa2"><circle cx="11" cy="11" r="11"/></clipPath></defs><g clip-path="url(#fa2)"><rect width="22" height="22" fill="#4a2b1d"/><path d="M14.5 0H22v10Q19.5 4.500 14.500 2z" fill="#7a9e3a"/><path d="M2 22c.5-3 3-4.500 5.500-5h7c2.500.5 5 2 5.500 5z" fill="#d9a07e"/><ellipse cx="11" cy="12.2" rx="5.900" ry="7.500" fill="#e6ae8e"/><ellipse cx="11.300" cy="12.500" rx="4" ry="5.500" fill="#efbea2"/><path d="M4.300 11C4.500 4.500 8.500 2.300 12 2.800c4 .5 6 3.700 5.800 8.700C16.500 8 14.300 6.200 11.500 6.200 8.500 6.200 6 7.800 4.300 11z" fill="#3e2317"/><circle cx="8.700" cy="11.600" r=".75" fill="#4a2a1c"/><circle cx="13.500" cy="11.600" r=".75" fill="#4a2a1c"/><path d="M8.300 15.300q2.700 2.600 5.400 0-2.700 1.100-5.400 0z" fill="#fff"/><path d="M8.300 15.300q2.700 1.100 5.400 0-2.700-.2-5.400 0z" fill="#c9705f"/></g></svg>
<div class="t" style="left:824.6px;top:249px;font-size:11.2px;letter-spacing:-0.076px;color:#555c69;">Emilia Schmidt</div>
<div class="t" style="left:932.3px;top:247px;font-size:11.2px;letter-spacing:0.111px;color:#555c69;">Unter 50</div>
<div class="cb" style="top:304.2px"></div><svg class="abs" style="left:233.8px;top:305.5px" width="11.4" height="12" viewBox="0 0 11.4 12" stroke="#c2c5cb" stroke-width="1.25"><path d="M0 2.200h11.400M0 5.600h11.400M0 9h11.400"/></svg>
<div class="av" style="top:304.5px"><svg width="38.8" height="38.6" viewBox="0 0 40 40" fill="#fff"><g opacity=".93"><ellipse cx="11.8" cy="16.5" rx="2.700" ry="3.700"/><path d="M5.800 25.700c.2-2.200 1.300-3.300 3.400-3.900.9-.3 1.300-.8 1.400-1.500h2.400c.1.700.5 1.200 1.400 1.500l1.200.5-1.600 3.900c-2.900.1-5.700 0-8.200-.5z"/><ellipse cx="28.200" cy="16.500" rx="2.700" ry="3.700"/><path d="M34.200 25.700c-.2-2.200-1.300-3.300-3.400-3.900-.9-.3-1.300-.8-1.400-1.500H27c-.1.700-.5 1.200-1.400 1.500l-1.200.5 1.600 3.900c2.900.1 5.700 0 8.200-.5z"/></g><g stroke="#c8c8cb" stroke-width=".7"><ellipse cx="20" cy="15" rx="3.400" ry="4.700"/><path d="M12 27.600c.3-3.200 1.600-4.600 4.300-5.400 1.400-.4 2-1.100 2.100-2.300h3.200c.1 1.200.7 1.900 2.100 2.300 2.700.8 4 2.200 4.300 5.400-5.100 1-10.900 1-16 0z"/></g></svg></div>
<div class="t" style="left:302.6px;top:313px;font-size:11.2px;letter-spacing:-0.082px;color:#2067b0;">Muster AG</div>
<div class="t" style="left:302.6px;top:325px;font-size:11.2px;letter-spacing:-0.24px;color:#4f5660;">Kunde</div>
<div class="t" style="left:428.25px;top:306px;font-size:11.2px;letter-spacing:-0.107px;color:#555c69;">Muster AG</div>
<div class="t" style="left:655.5px;top:306px;font-size:11.2px;letter-spacing:-0.34px;color:#555c69;">Kunde</div>
<div class="t" style="left:932.3px;top:306px;font-size:11.2px;letter-spacing:0.571px;color:#555c69;">50-250</div>
<div class="cb" style="top:362.7px"></div><svg class="abs" style="left:233.8px;top:364px" width="11.4" height="12" viewBox="0 0 11.4 12" stroke="#c2c5cb" stroke-width="1.25"><path d="M0 2.200h11.400M0 5.600h11.400M0 9h11.400"/></svg>
<div class="av" style="top:363px"><svg width="38.8" height="38.6" viewBox="0 0 40 40" fill="#fff"><g opacity=".93"><ellipse cx="11.8" cy="16.5" rx="2.700" ry="3.700"/><path d="M5.800 25.700c.2-2.200 1.300-3.300 3.400-3.900.9-.3 1.300-.8 1.400-1.500h2.400c.1.700.5 1.200 1.400 1.500l1.200.5-1.600 3.900c-2.900.1-5.700 0-8.200-.5z"/><ellipse cx="28.200" cy="16.500" rx="2.700" ry="3.700"/><path d="M34.200 25.700c-.2-2.200-1.300-3.300-3.400-3.900-.9-.3-1.300-.8-1.400-1.500H27c-.1.700-.5 1.200-1.400 1.500l-1.200.5 1.600 3.900c2.900.1 5.700 0 8.200-.5z"/></g><g stroke="#c8c8cb" stroke-width=".7"><ellipse cx="20" cy="15" rx="3.400" ry="4.700"/><path d="M12 27.600c.3-3.200 1.600-4.600 4.300-5.400 1.400-.4 2-1.100 2.100-2.300h3.200c.1 1.200.7 1.900 2.100 2.300 2.700.8 4 2.200 4.300 5.400-5.100 1-10.900 1-16 0z"/></g></svg></div>
<div class="t" style="left:302.6px;top:365px;font-size:11.2px;letter-spacing:-0.067px;color:#2067b0;">QYC-Technologien</div>
<div class="t" style="left:302.6px;top:377px;font-size:11.2px;letter-spacing:-0.309px;color:#2067b0;">GmbH</div>
<div class="t" style="left:302.6px;top:390px;font-size:11.2px;letter-spacing:0.007px;color:#4f5660;">Lieferant</div>
<div class="t" style="left:428.25px;top:364px;font-size:11.2px;letter-spacing:-0.13px;color:#555c69;">QYC-Technologien GmbH</div>
<div class="t" style="left:655.5px;top:364px;font-size:11.2px;letter-spacing:-0.018px;color:#555c69;">Lieferant</div>
<svg class="abs" style="left:799.3px;top:363px" width="17.2" height="17.2" viewBox="0 0 22 22"><defs><clipPath id="fa4"><circle cx="11" cy="11" r="11"/></clipPath></defs><g clip-path="url(#fa4)"><rect width="22" height="22" fill="#4a2b1d"/><path d="M14.5 0H22v10Q19.5 4.500 14.500 2z" fill="#7a9e3a"/><path d="M2 22c.5-3 3-4.500 5.500-5h7c2.500.5 5 2 5.500 5z" fill="#d9a07e"/><ellipse cx="11" cy="12.2" rx="5.900" ry="7.500" fill="#e6ae8e"/><ellipse cx="11.300" cy="12.500" rx="4" ry="5.500" fill="#efbea2"/><path d="M4.300 11C4.500 4.500 8.500 2.300 12 2.800c4 .5 6 3.700 5.800 8.700C16.500 8 14.300 6.200 11.500 6.200 8.500 6.200 6 7.800 4.300 11z" fill="#3e2317"/><circle cx="8.700" cy="11.600" r=".75" fill="#4a2a1c"/><circle cx="13.500" cy="11.600" r=".75" fill="#4a2a1c"/><path d="M8.300 15.300q2.700 2.600 5.400 0-2.700 1.100-5.400 0z" fill="#fff"/><path d="M8.300 15.300q2.700 1.100 5.400 0-2.700-.2-5.400 0z" fill="#c9705f"/></g></svg>
<div class="t" style="left:824.6px;top:366px;font-size:11.2px;letter-spacing:-0.076px;color:#555c69;">Emilia Schmidt</div>
<div class="t" style="left:932.3px;top:364px;font-size:11.2px;letter-spacing:0.111px;color:#555c69;">Unter 50</div>
<div class="cb" style="top:421.2px"></div><svg class="abs" style="left:233.8px;top:422.5px" width="11.4" height="12" viewBox="0 0 11.4 12" stroke="#c2c5cb" stroke-width="1.25"><path d="M0 2.200h11.400M0 5.600h11.400M0 9h11.400"/></svg>
<div class="av" style="top:421.5px;background:#d8d4d2"><svg width="38.8" height="38.6" viewBox="0 0 40 40"><defs><filter id="pb" x="-5%" y="-5%" width="110%" height="110%"><feGaussianBlur stdDeviation=".55"/></filter></defs><g filter="url(#pb)"><rect x="-2" y="-2" width="44" height="44" fill="#e3e6ee"/><rect x="-2" y="-2" width="44" height="7" fill="#5a3a26"/><path d="M-2 4h44v3.500H-2z" fill="#b08a5a"/><path d="M14 0h12l-2 4.500-2.500 1.500-1.500 2-1.500-2L16 4.500z" fill="#f3d596"/><ellipse cx="20" cy="3" rx="5" ry="2" fill="#f7e2ae"/><rect x="-2" y="6" width="9.500" height="30" fill="#c4a070"/><rect x="32.500" y="6" width="9.500" height="30" fill="#c4a070"/><rect x="-2" y="11" width="8" height="3" fill="#ead9b8"/><rect x="-2" y="19" width="8" height="3" fill="#ead9b8"/><rect x="34" y="11" width="8" height="3" fill="#ead9b8"/><rect x="34" y="19" width="8" height="3" fill="#ead9b8"/><rect x="0" y="15" width="5" height="3" fill="#7a5460"/><rect x="1" y="24" width="5" height="8" fill="#8a2840"/><rect x="35" y="15" width="5" height="3" fill="#7a5460"/><rect x="35" y="26" width="4" height="6" fill="#8a2840"/><rect x="7.500" y="7" width="25" height="5" fill="#dfe5f0"/><rect x="7.500" y="12" width="25" height="1.800" fill="#6a5a78"/><rect x="7.500" y="13.800" width="25" height="2.200" fill="#ece6e0"/><rect x="7.500" y="16" width="25" height="1.600" fill="#7a6078"/><rect x="7.500" y="17.600" width="25" height="2.400" fill="#ece6e0"/><rect x="7.500" y="20" width="25" height="1.500" fill="#7a6078"/><rect x="7.500" y="21.500" width="25" height="2" fill="#e6ddd6"/><rect x="7.500" y="23.500" width="25" height="6.500" fill="#a32a4c"/><rect x="7.500" y="23.500" width="25" height="1.500" fill="#7a2040"/><rect x="-2" y="30" width="44" height="12" fill="#ececf0"/><rect x="-2" y="30" width="9" height="6" fill="#b9a080"/><path d="M19 11.500c.5-2 2.500-3 4.500-2.700 2 .3 3.200 1.800 3.400 3.800l-.6 3H19.500z" fill="#3a3842"/><path d="M19.500 12.500 15.800 13.600l3.700 1.500z" fill="#6a5058"/><path d="M19.500 15c2-1 5-1 7 .5 2 2 3 6 3.200 9l-2.200.5-.5-2.500-.5 3h-7c-.5-3.500-.5-7 0-10.500z" fill="#8a8a94"/><path d="M19.500 18.500 15 21.500l1 1.500 3.500-2z" fill="#7a7a84"/><circle cx="14.800" cy="22" r="1.400" fill="#c8882a"/><rect x="18.800" y="23.300" width="8.500" height="3.200" fill="#d49a34"/><rect x="21" y="23.800" width="1.500" height="2.500" fill="#2a4a80"/><rect x="24" y="23.800" width="1.300" height="2.500" fill="#2a4a80"/><path d="M19 26.300h8l.6 4-1.300 4.500h-2.300l-.4-4.500-1 .1-.6 4.400h-2.500z" fill="#2a4678"/><rect x="18.800" y="34" width="3.600" height="2.600" rx=".8" fill="#2a2a30"/><rect x="23.800" y="34" width="3.600" height="2.600" rx=".8" fill="#2a2a30"/><path d="M15.300 22.500 12.500 34" stroke="#6a5a50" stroke-width=".9"/><path d="M10.500 34.500h4.500v1.500h-5.500z" fill="#1e1e22"/><rect x="27.300" y="30.500" width="6" height="5" rx=".5" fill="#3868b0"/><rect x="27.300" y="30.500" width="6" height="1.300" fill="#28508a"/><circle cx="29.500" cy="27.500" r="1.500" fill="#c8882a"/></g></svg></div>
<div class="t" style="left:302.6px;top:429px;font-size:11.2px;letter-spacing:-0.082px;color:#2067b0;">Muster AG</div>
<div class="t" style="left:302.6px;top:442px;font-size:11.2px;letter-spacing:-0.24px;color:#4f5660;">Kunde</div>
<div class="t" style="left:428.25px;top:423px;font-size:11.2px;letter-spacing:-0.107px;color:#555c69;">Muster AG</div>
<div class="t" style="left:655.5px;top:423px;font-size:11.2px;letter-spacing:-0.34px;color:#555c69;">Kunde</div>
<div class="t" style="left:932.3px;top:423px;font-size:11.2px;letter-spacing:0.571px;color:#555c69;">50-250</div>
<div class="cb" style="top:479.7px"></div><svg class="abs" style="left:233.8px;top:481px" width="11.4" height="12" viewBox="0 0 11.4 12" stroke="#c2c5cb" stroke-width="1.25"><path d="M0 2.200h11.400M0 5.600h11.400M0 9h11.400"/></svg>
<div class="av" style="top:480px"><svg width="38.8" height="38.6" viewBox="0 0 40 40" fill="#fff"><g opacity=".93"><ellipse cx="11.8" cy="16.5" rx="2.700" ry="3.700"/><path d="M5.800 25.700c.2-2.200 1.300-3.300 3.400-3.900.9-.3 1.300-.8 1.400-1.500h2.400c.1.700.5 1.200 1.400 1.500l1.200.5-1.600 3.900c-2.900.1-5.700 0-8.200-.5z"/><ellipse cx="28.200" cy="16.500" rx="2.700" ry="3.700"/><path d="M34.200 25.700c-.2-2.200-1.300-3.300-3.400-3.900-.9-.3-1.300-.8-1.400-1.500H27c-.1.700-.5 1.200-1.400 1.500l-1.200.5 1.600 3.900c2.900.1 5.700 0 8.200-.5z"/></g><g stroke="#c8c8cb" stroke-width=".7"><ellipse cx="20" cy="15" rx="3.400" ry="4.700"/><path d="M12 27.600c.3-3.200 1.600-4.600 4.300-5.400 1.400-.4 2-1.100 2.100-2.300h3.200c.1 1.200.7 1.900 2.100 2.300 2.700.8 4 2.200 4.300 5.400-5.100 1-10.900 1-16 0z"/></g></svg></div>
<div class="t" style="left:302.6px;top:488px;font-size:11.2px;letter-spacing:-0.082px;color:#2067b0;">Muster AG</div>
<div class="t" style="left:302.6px;top:501px;font-size:11.2px;letter-spacing:-0.24px;color:#4f5660;">Kunde</div>
<div class="t" style="left:428.25px;top:481px;font-size:11.2px;letter-spacing:-0.107px;color:#555c69;">Muster AG</div>
<div class="t" style="left:655.5px;top:481px;font-size:11.2px;letter-spacing:-0.34px;color:#555c69;">Kunde</div>
<svg class="abs" style="left:799.3px;top:480px" width="17.2" height="17.2" viewBox="0 0 22 22"><defs><clipPath id="fa6"><circle cx="11" cy="11" r="11"/></clipPath></defs><g clip-path="url(#fa6)"><rect width="22" height="22" fill="#4a2b1d"/><path d="M14.5 0H22v10Q19.5 4.500 14.500 2z" fill="#7a9e3a"/><path d="M2 22c.5-3 3-4.500 5.500-5h7c2.500.5 5 2 5.500 5z" fill="#d9a07e"/><ellipse cx="11" cy="12.2" rx="5.900" ry="7.500" fill="#e6ae8e"/><ellipse cx="11.300" cy="12.500" rx="4" ry="5.500" fill="#efbea2"/><path d="M4.300 11C4.500 4.500 8.500 2.300 12 2.800c4 .5 6 3.700 5.800 8.700C16.500 8 14.300 6.200 11.500 6.200 8.500 6.200 6 7.800 4.300 11z" fill="#3e2317"/><circle cx="8.700" cy="11.600" r=".75" fill="#4a2a1c"/><circle cx="13.500" cy="11.600" r=".75" fill="#4a2a1c"/><path d="M8.300 15.300q2.700 2.600 5.400 0-2.700 1.100-5.400 0z" fill="#fff"/><path d="M8.300 15.300q2.700 1.100 5.400 0-2.700-.2-5.400 0z" fill="#c9705f"/></g></svg>
<div class="t" style="left:824.6px;top:483px;font-size:11.2px;letter-spacing:-0.076px;color:#555c69;">Emilia Schmidt</div>
<div class="t" style="left:932.3px;top:481px;font-size:11.2px;letter-spacing:0.571px;color:#555c69;">50-250</div>
<div class="t" style="left:1136.6px;top:481px;font-size:11.2px;letter-spacing:-0.067px;color:#555c69;">03.12.2024</div>
<div class="cb" style="top:538.2px"></div><svg class="abs" style="left:233.8px;top:539.5px" width="11.4" height="12" viewBox="0 0 11.4 12" stroke="#c2c5cb" stroke-width="1.25"><path d="M0 2.200h11.400M0 5.600h11.400M0 9h11.400"/></svg>
<div class="av" style="top:538.5px"><svg width="38.8" height="38.6" viewBox="0 0 40 40" fill="#fff"><g opacity=".93"><ellipse cx="11.8" cy="16.5" rx="2.700" ry="3.700"/><path d="M5.800 25.700c.2-2.200 1.300-3.300 3.400-3.900.9-.3 1.300-.8 1.400-1.500h2.400c.1.700.5 1.200 1.400 1.500l1.200.5-1.600 3.900c-2.900.1-5.700 0-8.200-.5z"/><ellipse cx="28.200" cy="16.500" rx="2.700" ry="3.700"/><path d="M34.200 25.700c-.2-2.200-1.300-3.300-3.400-3.900-.9-.3-1.300-.8-1.400-1.500H27c-.1.700-.5 1.200-1.400 1.500l-1.200.5 1.600 3.900c2.900.1 5.700 0 8.200-.5z"/></g><g stroke="#c8c8cb" stroke-width=".7"><ellipse cx="20" cy="15" rx="3.400" ry="4.700"/><path d="M12 27.600c.3-3.200 1.600-4.600 4.300-5.400 1.400-.4 2-1.100 2.100-2.300h3.200c.1 1.200.7 1.900 2.100 2.300 2.700.8 4 2.200 4.300 5.400-5.100 1-10.900 1-16 0z"/></g></svg></div>
<div class="t" style="left:302.6px;top:547px;font-size:11.2px;letter-spacing:-0.326px;color:#2067b0;">Lead 14</div>
<div class="t" style="left:302.6px;top:559px;font-size:11.2px;letter-spacing:-0.24px;color:#4f5660;">Kunde</div>
<div class="t" style="left:428.25px;top:540px;font-size:11.2px;letter-spacing:-0.384px;color:#555c69;">Lead 14</div>
<div class="t" style="left:655.5px;top:540px;font-size:11.2px;letter-spacing:-0.34px;color:#555c69;">Kunde</div>
<svg class="abs" style="left:799.3px;top:538.5px" width="17.2" height="17.2" viewBox="0 0 22 22"><defs><clipPath id="fa7"><circle cx="11" cy="11" r="11"/></clipPath></defs><g clip-path="url(#fa7)"><rect width="22" height="22" fill="#4a2b1d"/><path d="M14.5 0H22v10Q19.5 4.500 14.500 2z" fill="#7a9e3a"/><path d="M2 22c.5-3 3-4.500 5.500-5h7c2.500.5 5 2 5.500 5z" fill="#d9a07e"/><ellipse cx="11" cy="12.2" rx="5.900" ry="7.500" fill="#e6ae8e"/><ellipse cx="11.300" cy="12.500" rx="4" ry="5.500" fill="#efbea2"/><path d="M4.300 11C4.500 4.500 8.500 2.300 12 2.800c4 .5 6 3.700 5.800 8.700C16.500 8 14.300 6.200 11.500 6.200 8.500 6.200 6 7.800 4.300 11z" fill="#3e2317"/><circle cx="8.700" cy="11.600" r=".75" fill="#4a2a1c"/><circle cx="13.500" cy="11.600" r=".75" fill="#4a2a1c"/><path d="M8.300 15.300q2.700 2.600 5.400 0-2.700 1.100-5.400 0z" fill="#fff"/><path d="M8.300 15.300q2.700 1.100 5.400 0-2.700-.2-5.400 0z" fill="#c9705f"/></g></svg>
<div class="t" style="left:824.6px;top:542px;font-size:11.2px;letter-spacing:-0.076px;color:#555c69;">Emilia Schmidt</div>
<div class="t" style="left:932.3px;top:540px;font-size:11.2px;letter-spacing:0.111px;color:#555c69;">Unter 50</div>
<div class="t" style="left:1136.6px;top:540px;font-size:11.2px;letter-spacing:-0.122px;color:#555c69;">25.10.2024</div>
<div class="cb" style="top:596.7px"></div><svg class="abs" style="left:233.8px;top:598px" width="11.4" height="12" viewBox="0 0 11.4 12" stroke="#c2c5cb" stroke-width="1.25"><path d="M0 2.200h11.400M0 5.600h11.400M0 9h11.400"/></svg>
<div class="av" style="top:597px"><svg width="38.8" height="38.6" viewBox="0 0 40 40" fill="#fff"><g opacity=".93"><ellipse cx="11.8" cy="16.5" rx="2.700" ry="3.700"/><path d="M5.800 25.700c.2-2.200 1.300-3.300 3.400-3.900.9-.3 1.300-.8 1.400-1.500h2.400c.1.700.5 1.200 1.400 1.500l1.200.5-1.600 3.900c-2.900.1-5.700 0-8.200-.5z"/><ellipse cx="28.200" cy="16.500" rx="2.700" ry="3.700"/><path d="M34.200 25.700c-.2-2.200-1.300-3.300-3.400-3.900-.9-.3-1.300-.8-1.400-1.500H27c-.1.700-.5 1.200-1.400 1.500l-1.200.5 1.600 3.900c2.900.1 5.700 0 8.200-.5z"/></g><g stroke="#c8c8cb" stroke-width=".7"><ellipse cx="20" cy="15" rx="3.400" ry="4.700"/><path d="M12 27.600c.3-3.200 1.600-4.600 4.300-5.400 1.400-.4 2-1.100 2.100-2.300h3.200c.1 1.200.7 1.900 2.100 2.300 2.700.8 4 2.200 4.300 5.400-5.100 1-10.900 1-16 0z"/></g></svg></div>
<div class="t" style="left:302.6px;top:605px;font-size:11.2px;letter-spacing:-0.065px;color:#2067b0;">NeuStadt GmbH</div>
<div class="t" style="left:302.6px;top:617px;font-size:11.2px;letter-spacing:-0.24px;color:#4f5660;">Kunde</div>
<div class="t" style="left:428.25px;top:598px;font-size:11.2px;letter-spacing:-0.094px;color:#555c69;">NeuStadt GmbH</div>
<div class="t" style="left:655.5px;top:598px;font-size:11.2px;letter-spacing:-0.34px;color:#555c69;">Kunde</div>
<svg class="abs" style="left:799.3px;top:597px" width="17.2" height="17.2" viewBox="0 0 22 22"><defs><clipPath id="fa8"><circle cx="11" cy="11" r="11"/></clipPath></defs><g clip-path="url(#fa8)"><rect width="22" height="22" fill="#4a2b1d"/><path d="M14.5 0H22v10Q19.5 4.500 14.500 2z" fill="#7a9e3a"/><path d="M2 22c.5-3 3-4.500 5.500-5h7c2.500.5 5 2 5.500 5z" fill="#d9a07e"/><ellipse cx="11" cy="12.2" rx="5.900" ry="7.500" fill="#e6ae8e"/><ellipse cx="11.300" cy="12.500" rx="4" ry="5.500" fill="#efbea2"/><path d="M4.300 11C4.500 4.500 8.500 2.300 12 2.800c4 .5 6 3.700 5.800 8.700C16.500 8 14.300 6.200 11.500 6.200 8.500 6.200 6 7.800 4.300 11z" fill="#3e2317"/><circle cx="8.700" cy="11.600" r=".75" fill="#4a2a1c"/><circle cx="13.500" cy="11.600" r=".75" fill="#4a2a1c"/><path d="M8.300 15.300q2.700 2.600 5.400 0-2.700 1.100-5.400 0z" fill="#fff"/><path d="M8.300 15.300q2.700 1.100 5.400 0-2.700-.2-5.400 0z" fill="#c9705f"/></g></svg>
<div class="t" style="left:824.6px;top:600px;font-size:11.2px;letter-spacing:-0.076px;color:#555c69;">Emilia Schmidt</div>
<div class="t" style="left:932.3px;top:598px;font-size:11.2px;letter-spacing:0.111px;color:#555c69;">Unter 50</div>
<div class="t" style="left:1136.6px;top:598px;font-size:11.2px;letter-spacing:-0.289px;color:#555c69;">13.10.2024</div>
<div class="cb" style="top:655.2px"></div>
<svg class="abs" style="left:799.3px;top:655.4px" width="17.2" height="17.2" viewBox="0 0 22 22"><defs><clipPath id="fa9"><circle cx="11" cy="11" r="11"/></clipPath></defs><g clip-path="url(#fa9)"><rect width="22" height="22" fill="#4a2b1d"/><path d="M14.5 0H22v10Q19.5 4.500 14.500 2z" fill="#7a9e3a"/><path d="M2 22c.5-3 3-4.500 5.500-5h7c2.500.5 5 2 5.500 5z" fill="#d9a07e"/><ellipse cx="11" cy="12.2" rx="5.900" ry="7.500" fill="#e6ae8e"/><ellipse cx="11.300" cy="12.500" rx="4" ry="5.500" fill="#efbea2"/><path d="M4.300 11C4.500 4.500 8.500 2.300 12 2.800c4 .5 6 3.700 5.800 8.700C16.500 8 14.300 6.200 11.500 6.200 8.500 6.200 6 7.800 4.300 11z" fill="#3e2317"/><circle cx="8.700" cy="11.600" r=".75" fill="#4a2a1c"/><circle cx="13.500" cy="11.600" r=".75" fill="#4a2a1c"/><path d="M8.300 15.300q2.700 2.600 5.400 0-2.700 1.100-5.400 0z" fill="#fff"/><path d="M8.300 15.300q2.700 1.100 5.400 0-2.700-.2-5.400 0z" fill="#c9705f"/></g></svg>
<div class="abs" style="left:202px;top:622px;width:1026px;height:34px;background:linear-gradient(180deg,rgba(110,115,125,0) 0,rgba(110,115,125,.035) 60%,rgba(110,115,125,.07) 100%)"></div>
<div class="abs" style="left:202px;top:600px;width:1026px;height:56px;overflow:hidden"><div class="abs" style="left:-30px;top:59px;width:970px;height:12px;box-shadow:0 0 12px 3px rgba(40,45,55,.5)"></div></div>
<div class="menu" style="left:458.2px;top:38.3px;width:154px;height:153.8px;border-radius:14px"></div>
<div class="t" style="left:472.5px;top:55px;font-size:11.2px;letter-spacing:-0.132px;color:#333;">Kontakte</div>
<div class="t" style="left:472.5px;top:83px;font-size:11.2px;letter-spacing:-0.08px;color:#1f76f4;">Unternehmen</div>
<div class="t" style="left:472.5px;top:110px;font-size:11.2px;letter-spacing:0.06px;color:#333;">Vertragsparteien</div>
<svg class="abs" style="left:587px;top:110.2px" width="6" height="10" viewBox="0 0 6 10" fill="none" stroke="#b8bcc3" stroke-width="1"><path d="M.8.700 5 5 .800 9.300"/></svg>
<div class="t" style="left:472.5px;top:138px;font-size:11.2px;letter-spacing:-0.025px;color:#333;">Anbieter</div>
<svg class="abs" style="left:587px;top:138.2px" width="6" height="10" viewBox="0 0 6 10" fill="none" stroke="#b8bcc3" stroke-width="1"><path d="M.8.700 5 5 .800 9.300"/></svg>
<div class="t" style="left:472.5px;top:166px;font-size:11.2px;letter-spacing:0.019px;color:#333;">Contact Center</div>
<div class="menu" style="left:1037.2px;top:91.5px;width:241px;height:345.2px;border-radius:14px"></div>
<div class="abs" style="left:1210.8px;top:85.3px;width:0;height:0;border-left:6.4px solid transparent;border-right:6.4px solid transparent;border-bottom:7px solid #fff"></div>
<div class="t" style="left:1050.5px;top:108px;font-size:11.2px;letter-spacing:-0.023px;color:#333;">Import aus CSV-Datei</div>
<div class="t" style="left:1050.5px;top:136px;font-size:11.2px;letter-spacing:-0.129px;color:#333;">Aus einem anderen CRM migrieren</div>
<div class="t" style="left:1050.5px;top:177px;font-size:11.2px;letter-spacing:-0.052px;color:#333;">Unternehmen nach CSV exportieren</div>
<div class="t" style="left:1050.5px;top:204px;font-size:11.2px;letter-spacing:-0.044px;color:#333;">Unternehmen nach Excel exportieren</div>
<div class="t" style="left:1050.5px;top:245px;font-size:11.2px;letter-spacing:0.077px;color:#333;">Dublettenkontrolle</div>
<div class="t" style="left:1050.5px;top:273px;font-size:11.2px;letter-spacing:0.025px;color:#333;">Dubletten finden und vereinigen</div>
<div class="t" style="left:1050.5px;top:301px;font-size:11.2px;letter-spacing:-0.05px;color:#333;">So können Sie die Dubletten verwalten</div>
<div class="t" style="left:1050.5px;top:341px;font-size:11.2px;letter-spacing:-0.019px;color:#333;">Lösungspresets</div>
<div class="t" style="left:1050.5px;top:369px;font-size:11.2px;letter-spacing:-0.179px;color:#333;">Proaktives CRM</div>
<div class="t" style="left:1050.5px;top:410px;font-size:11.2px;letter-spacing:0.196px;color:#333;">Zugriffsrechte</div>
<div class="sep" style="top:161.0px"></div>
<div class="sep" style="top:229.0px"></div>
<div class="sep" style="top:326.0px"></div>
<div class="sep" style="top:394.0px"></div>
<div class="abs" style="left:1248.7px;top:297.4px;width:11.4px;height:11.4px;border-radius:50%;background:#c9ccd1;color:#fff;font-size:8.5px;font-weight:700;text-align:center;line-height:11.6px">?</div>
<svg class="abs" style="left:1253px;top:369.4px" width="6" height="10" viewBox="0 0 6 10" fill="none" stroke="#b8bcc3" stroke-width="1"><path d="M.8.700 5 5 .800 9.300"/></svg>
<div class="rb" style="left:10.6px;top:539.4px;width:165.2px;height:34.4px"></div>
<div class="rb" style="left:456.7px;top:5.3px;width:70.2px;height:28.8px"></div>
<div class="rb" style="left:460px;top:70.5px;width:115.5px;height:33.2px"></div>
<div class="rb" style="left:1200.8px;top:60.300px;width:31.200px;height:22.900px;background:rgba(110,165,245,.55)"></div>
<svg class="abs" style="left:1209.3px;top:66.500px" width="12" height="12" viewBox="0 0 12 12" fill="none" stroke="#fff" stroke-width="1" stroke-linejoin="round"><path d="M11.35 6.00L11.19 6.45L10.78 6.84L10.30 7.15L9.93 7.43L9.79 7.77L9.85 8.22L9.98 8.78L9.99 9.35L9.78 9.78L9.35 9.99L8.78 9.98L8.23 9.85L7.77 9.79L7.43 9.93L7.15 10.30L6.84 10.78L6.45 11.19L6.00 11.35L5.55 11.19L5.16 10.78L4.85 10.30L4.57 9.93L4.23 9.79L3.78 9.85L3.22 9.98L2.65 9.99L2.22 9.78L2.01 9.35L2.02 8.78L2.15 8.22L2.21 7.77L2.07 7.43L1.70 7.15L1.22 6.84L0.81 6.45L0.65 6.00L0.81 5.55L1.22 5.16L1.70 4.85L2.07 4.57L2.21 4.23L2.15 3.77L2.02 3.22L2.01 2.65L2.22 2.22L2.65 2.01L3.22 2.02L3.77 2.15L4.23 2.21L4.57 2.07L4.85 1.70L5.16 1.22L5.55 0.81L6.00 0.65L6.45 0.81L6.84 1.22L7.15 1.70L7.43 2.07L7.77 2.21L8.23 2.15L8.78 2.02L9.35 2.01L9.78 2.22L9.99 2.65L9.98 3.22L9.85 3.77L9.79 4.23L9.93 4.57L10.30 4.85L10.78 5.16L11.19 5.55Z"/><circle cx="6" cy="6" r="2.100"/></svg>
<div class="rb" style="left:1040px;top:99px;width:156.700px;height:32.400px"></div>
<div class="bd" style="left:164.9px;top:529.7px">1</div>
<div class="bd" style="left:516.35px;top:23.9px">2</div>
<div class="bd" style="left:564.8px;top:61.0px">3</div>
<div class="bd" style="left:1220.9px;top:50.4px">4</div>
<div class="bd" style="left:1185.9px;top:89.3px">5</div>
</div></body></html>
